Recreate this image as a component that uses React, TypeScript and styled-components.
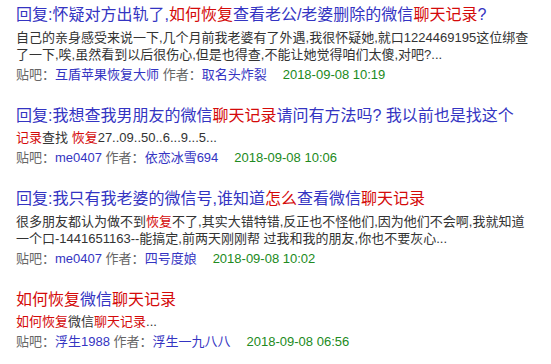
import React from "react";
import styled, { createGlobalStyle } from "styled-components";

const GlobalStyle = createGlobalStyle`
  html, body {
    margin: 0;
    padding: 0;
    background: #ffffff;
  }
  body {
    font-family: "Liberation Sans", "Noto Sans CJK SC", sans-serif;
  }
`;

const colors = {
  link: "#3434c2",
  red: "#d40a0a",
  text: "#333333",
  grey: "#666666",
  green: "#218a21",
};

type Part = { t: string; hl?: boolean };

type Post = {
  title: Part[];
  body: Part[][];
  bar: string;
  author: string;
  date: string;
};

const posts: Post[] = [
  {
    title: [
      { t: "回复:怀疑对方出轨了," },
      { t: "如何恢复", hl: true },
      { t: "查看老公/老婆删除的微信" },
      { t: "聊天记录", hl: true },
      { t: "?" },
    ],
    body: [
      [{ t: "自己的亲身感受来说一下,几个月前我老婆有了外遇,我很怀疑她,就口1224469195这位绑查" }],
      [{ t: "了一下,唉,虽然看到以后很伤心,但是也得查,不能让她觉得咱们太傻,对吧?..." }],
    ],
    bar: "互盾苹果恢复大师",
    author: "取名头炸裂",
    date: "2018-09-08 10:19",
  },
  {
    title: [
      { t: "回复:我想查我男朋友的微信" },
      { t: "聊天记录", hl: true },
      { t: "请问有方法吗? 我以前也是找这个" },
    ],
    body: [
      [
        { t: "记录", hl: true },
        { t: "查找 " },
        { t: "恢复", hl: true },
        { t: "27..09..50..6...9...5..." },
      ],
    ],
    bar: "me0407",
    author: "依恋冰雪694",
    date: "2018-09-08 10:06",
  },
  {
    title: [
      { t: "回复:我只有我老婆的微信号,谁知道" },
      { t: "怎么", hl: true },
      { t: "查看微信" },
      { t: "聊天记录", hl: true },
    ],
    body: [
      [
        { t: "很多朋友都认为做不到" },
        { t: "恢复", hl: true },
        { t: "不了,其实大错特错,反正也不怪他们,因为他们不会啊,我就知道" },
      ],
      [{ t: "一个口-1441651163--能搞定,前两天刚刚帮 过我和我的朋友,你也不要灰心..." }],
    ],
    bar: "me0407",
    author: "四号度娘",
    date: "2018-09-08 10:02",
  },
  {
    title: [
      { t: "如何恢复", hl: true },
      { t: "微信" },
      { t: "聊天记录", hl: true },
    ],
    body: [
      [
        { t: "如何恢复", hl: true },
        { t: "微信" },
        { t: "聊天记录", hl: true },
        { t: "..." },
      ],
    ],
    bar: "浮生1988",
    author: "浮生一九八八",
    date: "2018-09-08 06:56",
  },
];

const List = styled.div`
  display: flex;
  flex-direction: column;
  gap: 21px;
  padding: 4px 0 0 16px;
`;

const Entry = styled.div`
  display: flex;
  flex-direction: column;
`;

const Title = styled.a`
  font-size: 16px;
  line-height: 22px;
  color: ${colors.link};
  text-decoration: none;
  white-space: nowrap;
`;

const Hl = styled.em`
  font-style: normal;
  color: ${colors.red};
`;

const Body = styled.div`
  margin-top: 2.5px;
  font-size: 13px;
  line-height: 17px;
  color: ${colors.text};
`;

const BodyLine = styled.div`
  white-space: nowrap;
`;

const Meta = styled.div`
  margin-top: 2px;
  display: flex;
  align-items: baseline;
  font-size: 13px;
  line-height: 19px;
  color: ${colors.grey};
  white-space: nowrap;
`;

const MetaLink = styled.a`
  color: ${colors.link};
  text-decoration: none;
`;

const Date = styled.span`
  margin-left: 16px;
  color: ${colors.green};
`;

// highlighted keywords are red, the rest keeps the parent colour
const renderParts = (parts: Part[]) =>
  parts.map((p, i) => (p.hl ? <Hl key={i}>{p.t}</Hl> : <span key={i}>{p.t}</span>));

const App = (): JSX.Element => (
  <>
    <GlobalStyle />
    <List>
      {posts.map((post, i) => (
        <Entry key={i}>
          <Title href="#">{renderParts(post.title)}</Title>
          <Body>
            {post.body.map((line, j) => (
              <BodyLine key={j}>{renderParts(line)}</BodyLine>
            ))}
          </Body>
          <Meta>
            <span>贴吧：</span>
            <MetaLink href="#">{post.bar}</MetaLink>
            <span>&nbsp;作者：</span>
            <MetaLink href="#">{post.author}</MetaLink>
            <Date>{post.date}</Date>
          </Meta>
        </Entry>
      ))}
    </List>
  </>
);

export default App;
